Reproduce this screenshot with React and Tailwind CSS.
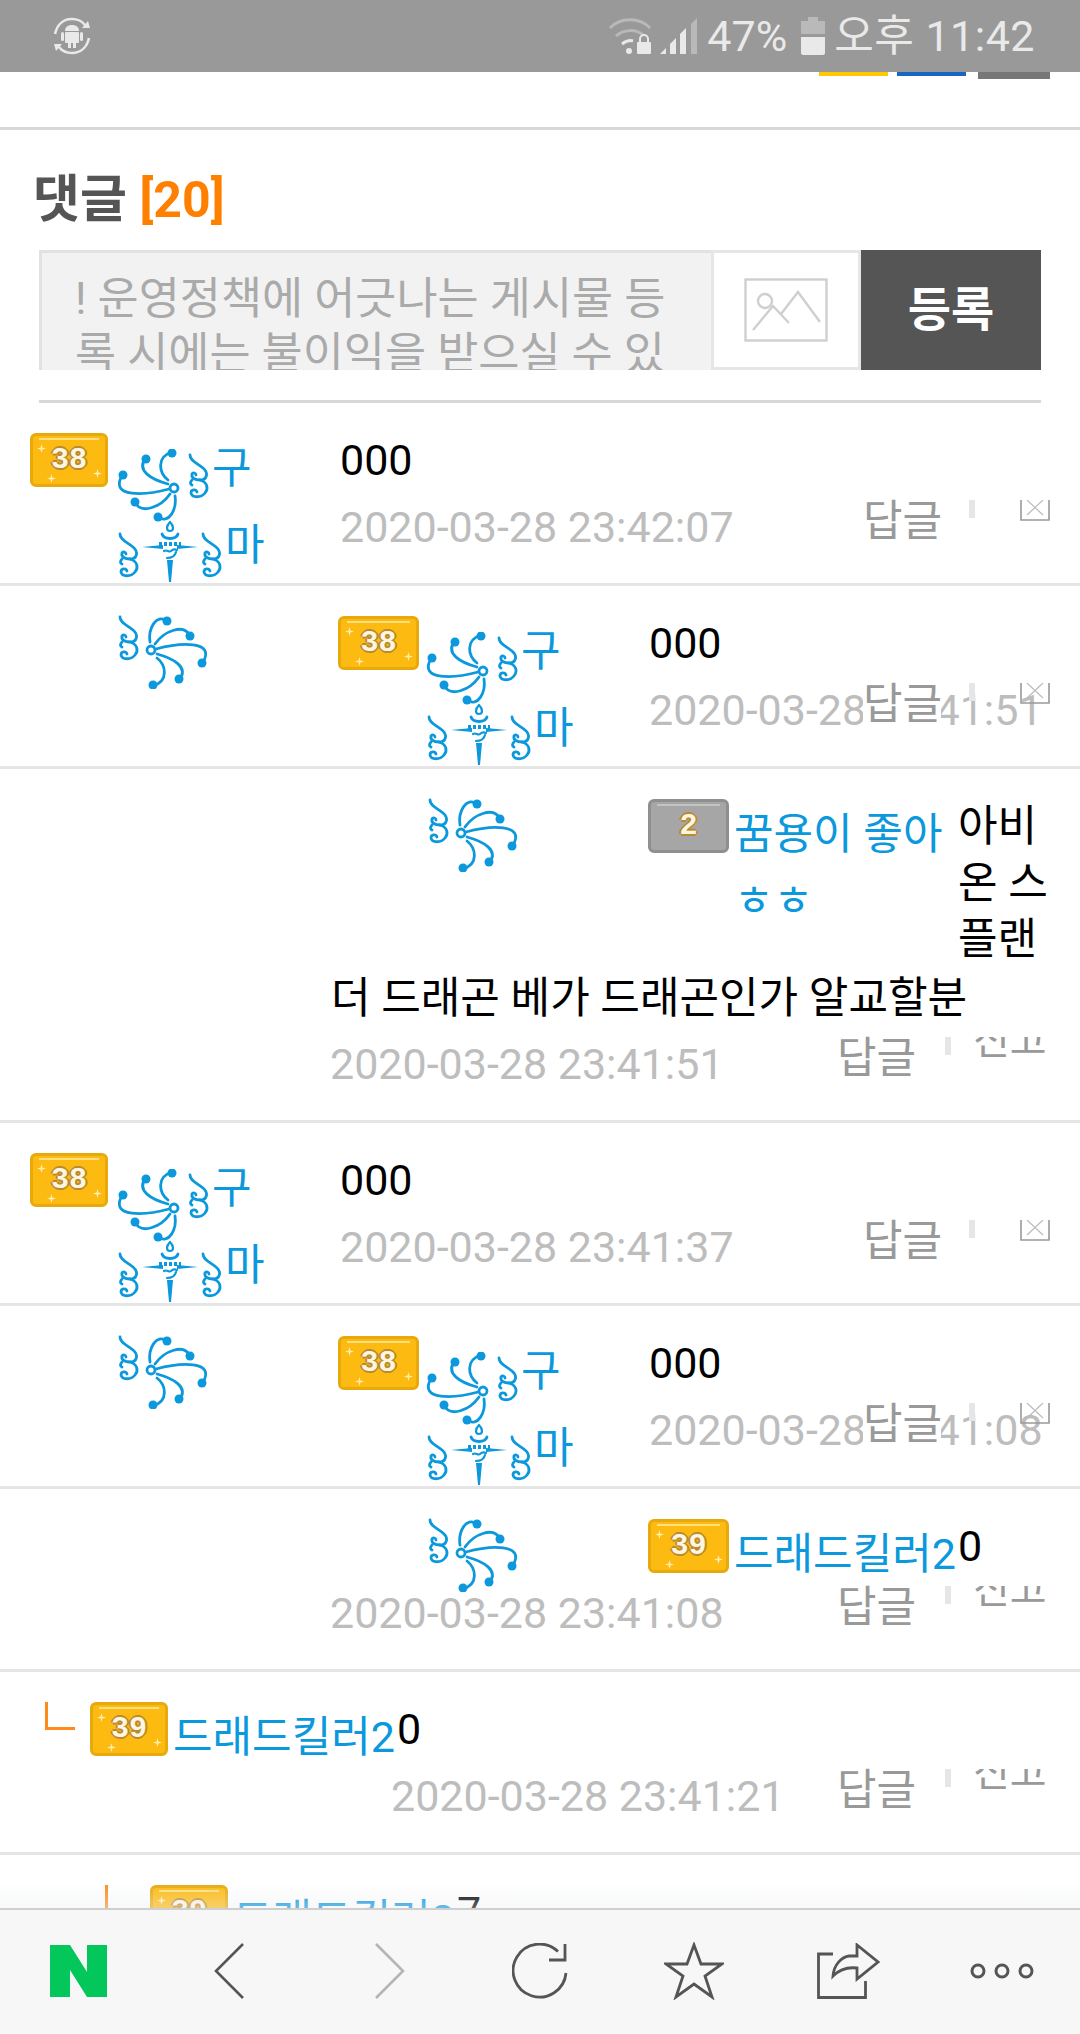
const BLUE = '#0b98dc'

function SCurl({ className }) {
  return (
    <svg viewBox="0 0 24 46" width="24" height="46" fill="none" stroke={BLUE} strokeWidth="2.8" strokeLinecap="round" className={className}>
      <path d="M3 2C3 8 10 10 16 15c6 5 4 12-3 12-5 0-9-2-8-6 1-2 4-1 4 1" />
      <path d="M13 27c7 2 9 8 5 13-4 5-13 5-14 0 0-4 5-4 6-1" />
      <path d="M5 27c-2 2-2 4 0 5" />
    </svg>
  )
}

function Flower({ className }) {
  return (
    <svg viewBox="0 0 64 74" width="64" height="74" fill="none" stroke={BLUE} strokeWidth="2.8" strokeLinecap="round" className={className}>
      <circle cx="57" cy="39" r="4" />
      <path d="M51 31C42 24 39 8 55 3" />
      <path d="M51 35C36 31 18 22 29 9" />
      <path d="M52 40C30 46 -10 50 6 25" />
      <path d="M53 45C44 58 24 66 18 53" />
      <path d="M58 47C60 60 52 76 41 68" />
      <g fill={BLUE} stroke="none">
        <circle cx="55" cy="4" r="4.5" />
        <circle cx="29" cy="10" r="4.5" />
        <circle cx="6" cy="26" r="4.5" />
        <circle cx="18" cy="53" r="4.5" />
        <circle cx="41" cy="68" r="4.5" />
      </g>
    </svg>
  )
}

function Dagger({ className }) {
  return (
    <svg viewBox="0 0 56 62" width="56" height="62" fill="none" stroke={BLUE} strokeWidth="2.2" strokeLinecap="round" className={className}>
      <path d="M28 2c-4 4-4 9 0 9s4-5 0-9z" />
      <path d="M20 14c2 6 14 6 16 0" strokeWidth="2.8" />
      <path d="M17 24h22" strokeDasharray="3 2" strokeWidth="4" strokeLinecap="butt" />
      <path d="M22 31c3-2 5 2 7 0s4-2 6-1M25 38c4 0 8-2 9-6" />
      <path d="M0 27l21-2v4z" fill={BLUE} stroke="none" />
      <path d="M56 27l-21-2v4z" fill={BLUE} stroke="none" />
      <path d="M25 40h6l-2 22h-2z" fill={BLUE} stroke="none" />
    </svg>
  )
}

function Lead() {
  return (
    <div className="flex w-[221px] shrink-0 pt-[29px] items-start">
      <SCurl />
      <Flower className="rotate-180 ml-[3px] shrink-0" />
    </div>
  )
}

function Nick() {
  return (
    <div className="w-[150px] shrink-0 pt-[46px] text-[#0b98dc] text-[43px] leading-[42px]">
      <div className="flex h-[71px] items-start">
        <Flower className="shrink-0" />
        <SCurl className="ml-[6px] mt-[4px] shrink-0" />
        <span className="ml-[1px] -mt-[2px]">구</span>
      </div>
      <div className="flex h-[62px] items-start">
        <SCurl className="mt-[12px] shrink-0" />
        <Dagger className="ml-[1px] shrink-0" />
        <SCurl className="ml-[2px] mt-[12px] shrink-0" />
        <span className="ml-[1px] mt-[4px]">마</span>
      </div>
    </div>
  )
}

function Sparkle({ className }) {
  return (
    <svg viewBox="0 0 10 10" width="9" height="9" className={`absolute ${className}`} fill="#ffeeb0">
      <path d="M5 0l1 4 4 1-4 1-1 4-1-4-4-1 4-1z" />
    </svg>
  )
}

function Badge({ level, gray, narrow }) {
  const tone = gray ? 'bg-[#a6a6a6] border-[#8f8f8f]' : 'bg-[#fdba10] border-[#e8a90c]'
  return (
    <div className={`relative mt-[30px] h-[54px] shrink-0 rounded-[6px] border-[3px] flex items-center justify-center ${narrow ? 'w-[78px]' : 'w-[81px]'} ${tone}`}>
      <div className={`absolute left-[6px] right-[6px] top-[2px] h-[2px] ${gray ? 'bg-[#c4c4c4]' : 'bg-[#ffdf80]'}`} />
      {!gray && <Sparkle className="left-[4px] top-[8px]" />}
      {!gray && <Sparkle className="right-[3px] bottom-[6px]" />}
      {!gray && <Sparkle className="left-[14px] bottom-[1px]" />}
      <span className="[font-family:'Liberation_Mono',monospace] font-bold text-[30px] leading-none text-[#fff6e0] [text-shadow:2px_0_0_#b98a32,-2px_0_0_#b98a32,0_2px_0_#b98a32,0_-2px_0_#b98a32]">{level}</span>
    </div>
  )
}

function Name({ children }) {
  return <div className="ml-[5px] pt-[37px] text-[43px] leading-[57px] text-[#0b98dc] whitespace-nowrap">{children}</div>
}

function Date_({ children, className = '' }) {
  return <div className={`text-[43px] leading-[57px] text-[#bdbdbd] whitespace-nowrap ${className}`}>{children}</div>
}

function Body({ text, date }) {
  return (
    <div className="ml-[73px] pt-[29px]">
      <div className="text-[43px] leading-[57px] text-black">{text}</div>
      <Date_ className="mt-[10px]">{date}</Date_>
    </div>
  )
}

function Actions({ deep }) {
  return (
    <div className={`absolute bottom-[35px] h-[57px] flex items-start ${deep ? 'left-[837px]' : 'left-[863px]'}`}>
      <span className="w-[78px] mt-[3px] bg-white text-[43px] leading-[54px] text-[#999] whitespace-nowrap">답글</span>
      <div className={`mt-[9px] w-[6px] h-[18px] bg-[#e6e6e6] ${deep ? 'ml-[30px]' : 'ml-[28px]'}`} />
      {deep ? (
        <div className="ml-[22px] mt-[9px] h-[24px] overflow-hidden flex items-end text-[#999] text-[40px] leading-[40px] whitespace-nowrap">
          <span className="block">신고</span>
        </div>
      ) : (
        <svg viewBox="0 0 30 21" width="30" height="21" fill="none" className="ml-[45px] mt-[9px]">
          <path d="M1 0v20h28V0" stroke="#999" strokeWidth="1.6" />
          <path d="M7 0l16 15M23 0L7 15" stroke="#bbb" strokeWidth="1.2" />
        </svg>
      )}
    </div>
  )
}

function Row({ children, deep, tall }) {
  return (
    <div className={`relative border-b-[3px] border-[#e5e5e5] ${tall ? 'h-[354px]' : 'h-[183px]'}`}>
      {children}
      <Actions deep={deep} />
    </div>
  )
}

function TopComment({ text, date }) {
  return (
    <Row>
      <div className="flex pl-[30px]">
        <Badge level="38" narrow />
        <div className="ml-[9px]"><Nick /></div>
        <Body text={text} date={date} />
      </div>
    </Row>
  )
}

function ReplyComment({ text, date }) {
  return (
    <Row>
      <div className="flex pl-[117px]">
        <Lead />
        <Badge level="38" />
        <div className="ml-[7px]"><Nick /></div>
        <Body text={text} date={date} />
      </div>
    </Row>
  )
}

function StatusBar() {
  return (
    <div className="h-[72px] bg-[#999999] flex items-center pl-[53px] pr-[45px] text-[#e9e9e9]">
      <svg viewBox="0 0 38 38" width="38" height="38" fill="none" stroke="#e9e9e9" strokeWidth="2.6">
        <path d="M2 17C4 8 10 2 19 2c6 0 10 2 13 6" />
        <path d="M36 21c-2 9-8 15-17 15-6 0-10-2-13-6" />
        <path d="M29 11h8l-2-7z" fill="#e9e9e9" stroke="none" />
        <path d="M9 27H1l2 7z" fill="#e9e9e9" stroke="none" />
        <g fill="#e9e9e9" stroke="none">
          <path d="M12 14c0-4 3-6 7-6s7 2 7 6z" />
          <rect x="12" y="15" width="14" height="11" rx="1" />
          <rect x="15" y="26" width="3" height="5" />
          <rect x="20" y="26" width="3" height="5" />
          <rect x="8" y="15" width="3" height="9" rx="1.5" />
          <rect x="27" y="15" width="3" height="9" rx="1.5" />
        </g>
      </svg>
      <div className="ml-auto flex items-center">
        <svg viewBox="0 0 44 38" width="44" height="38" fill="none">
          <path d="M2 11c10-11 30-11 40 0" stroke="#b9b9b9" strokeWidth="3" />
          <path d="M8 19c8-7 20-7 27-1" stroke="#b9b9b9" strokeWidth="3" />
          <path d="M14 27c4-3 8-4 11-3" stroke="#e9e9e9" strokeWidth="3" />
          <circle cx="21" cy="34" r="3" fill="#e9e9e9" />
          <rect x="29" y="25" width="14" height="12" rx="1" fill="#e9e9e9" />
          <path d="M32 25v-3a4 4 0 0 1 8 0v3" stroke="#e9e9e9" strokeWidth="2" />
        </svg>
        <svg viewBox="0 0 37 38" width="37" height="38" className="ml-[8px]">
          <path d="M0 37l6-6v6z" fill="#e9e9e9" />
          <path d="M10 37V27l6-6v16z" fill="#e9e9e9" />
          <path d="M20 37V17l6-6v26z" fill="#e9e9e9" />
          <path d="M31 37V7l6-6v36z" fill="#b9b9b9" />
        </svg>
        <span className="ml-[10px] text-[43px] leading-none [font-family:Roboto,sans-serif]">47%</span>
        <svg viewBox="0 0 24 38" width="24" height="38" className="ml-[14px]">
          <path d="M7 0h10v4h7v13H0V4h7z" fill="#b9b9b9" />
          <path d="M0 20h24v16a2 2 0 0 1-2 2H2a2 2 0 0 1-2-2z" fill="#e9e9e9" />
        </svg>
        <span className="ml-[9px] text-[43px] leading-none tracking-[0.5px]">오후 11:42</span>
      </div>
    </div>
  )
}

function BottomBar() {
  return (
    <div className="absolute left-0 right-0 bottom-0">
      <div className="h-[26px] bg-gradient-to-b from-transparent to-[#eef0f4]/40" />
      <div className="h-[126px] bg-[#f7f7f7] border-t-[2px] border-[#cfcfcf] flex items-center pl-[50px] pb-[2px]">
        <svg viewBox="0 0 57 52" width="57" height="52">
          <path d="M0 0h20l17 27V0h20v52H37L20 25v27H0z" fill="#03c75a" />
        </svg>
        <svg viewBox="0 0 30 56" width="30" height="56" fill="none" stroke="#555" strokeWidth="2.6" className="ml-[107px]">
          <path d="M29 1L2 28l27 27" />
        </svg>
        <svg viewBox="0 0 30 56" width="30" height="56" fill="none" stroke="#b5b5b5" strokeWidth="2.6" className="ml-[131px]">
          <path d="M1 1l27 27L1 55" />
        </svg>
        <svg viewBox="0 0 56 56" width="56" height="56" fill="none" stroke="#555" strokeWidth="2.8" className="ml-[107px]">
          <path d="M54 30A26.500 26.500 0 1 1 46 8.500" />
          <path d="M53 1v16H37" />
        </svg>
        <svg viewBox="0 0 60 58" width="60" height="58" fill="none" stroke="#555" strokeWidth="2.8" className="ml-[96px]">
          <path d="M30 3l7 19h21L41 34l7 21-18-13-18 13 7-21L2 22h21z" />
        </svg>
        <svg viewBox="0 0 63 56" width="63" height="56" fill="none" stroke="#555" strokeWidth="2.8" className="ml-[93px]">
          <path d="M16 11H1.500v43.500h47V38" />
          <path d="M16 33c1-12 9-19 16-20 3 0 5 0 8-0V2l21 17-21 17V25c-8-1-17 1-24 8z" />
        </svg>
        <svg viewBox="0 0 64 16" width="64" height="16" fill="none" stroke="#555" strokeWidth="3" className="ml-[90px]">
          <circle cx="8" cy="8" r="6" />
          <circle cx="32" cy="8" r="6" />
          <circle cx="56" cy="8" r="6" />
        </svg>
      </div>
    </div>
  )
}

export default function App() {
  return (
    <div className="relative h-[2034px] overflow-hidden bg-white [font-family:Roboto,'Noto_Sans_CJK_KR',sans-serif]">
      <StatusBar />

      <div className="h-[55px] flex justify-end items-start pr-[30px]">
        <div className="w-[69px] h-[4px] bg-[#ffc800]" />
        <div className="w-[69px] h-[4px] bg-[#1766c4] ml-[9px]" />
        <div className="w-[72px] h-[7px] bg-[#777] ml-[12px]" />
      </div>
      <div className="h-[3px] bg-[#d8d8d8]" />

      <div className="h-[120px] pl-[33px] pt-[40px]">
        <h2 className="text-[51px] leading-[60px] font-bold text-[#555]">
          댓글 <span className="text-[#ff7f00] text-[50px]">[20]</span>
        </h2>
      </div>

      <div className="mx-[39px] flex h-[120px]">
        <div className="w-[672px] border-t-[3px] border-l-[3px] border-[#e2e2e2] bg-[#f2f2f2] pl-[33px] pt-[19px] text-[44.700px] leading-[55px] text-[#aaaaaa] overflow-hidden whitespace-nowrap">
          <div>! 운영정책에 어긋나는 게시물 등</div>
          <div>록 시에는 불이익을 받으실 수 있</div>
        </div>
        <div className="w-[150px] border-[3px] border-[#e6e6e6] bg-white flex items-center justify-center">
          <svg viewBox="0 0 84 64" width="84" height="64" fill="none" stroke="#cfcfcf" strokeWidth="2.4">
            <rect x="1.500" y="1.500" width="81" height="61" />
            <circle cx="21" cy="23" r="7" />
            <path d="M9 52l20-24 16 17M37 36l17-22 22 30" />
          </svg>
        </div>
        <div className="w-[180px] bg-[#555] flex items-center justify-center text-white font-bold text-[47px]">등록</div>
      </div>

      <div className="mx-[39px] mt-[30px] h-[3px] bg-[#d8d8d8]" />

      <TopComment text="000" date="2020-03-28 23:42:07" />
      <ReplyComment text="000" date="2020-03-28 23:41:51" />

      <Row deep tall>
        <div className="flex pl-[427px]">
          <Lead />
          <Badge level="2" gray />
          <div className="w-[229px] shrink-0">
            <Name>꿈용이 좋아</Name>
            <div className="ml-[5px] mt-[10px] text-[43px] leading-[57px] text-[#0b98dc]">ㅎㅎ</div>
          </div>
          <div className="pt-[29px] text-[43px] leading-[56.500px] text-black whitespace-nowrap">
            <div>아비</div>
            <div>온 스</div>
            <div>플랜</div>
          </div>
        </div>
        <div className="pl-[331px] mt-[2px] text-[43px] leading-[56.500px] text-black whitespace-nowrap">더 드래곤 베가 드래곤인가 알교할분</div>
        <Date_ className="pl-[330px] mt-[10px]">2020-03-28 23:41:51</Date_>
      </Row>

      <TopComment text="000" date="2020-03-28 23:41:37" />
      <ReplyComment text="000" date="2020-03-28 23:41:08" />

      <Row deep>
        <div className="flex pl-[427px] h-[96px]">
          <Lead />
          <Badge level="39" />
          <Name>드래드킬러2</Name>
          <div className="ml-[2px] pt-[29px] text-[43px] leading-[57px] text-black">0</div>
        </div>
        <Date_ className="pl-[330px]">2020-03-28 23:41:08</Date_>
      </Row>

      <Row deep>
        <div className="flex pl-[45px] h-[96px]">
          <div className="mt-[30px] w-[30px] h-[28px] border-l-[3px] border-b-[3px] border-[#ff8c1a] shrink-0" />
          <div className="ml-[15px]"><Badge level="39" narrow /></div>
          <Name>드래드킬러2</Name>
          <div className="ml-[2px] pt-[29px] text-[43px] leading-[57px] text-black">0</div>
        </div>
        <Date_ className="pl-[391px]">2020-03-28 23:41:21</Date_>
      </Row>

      <div className="flex pl-[105px]">
        <div className="mt-[30px] w-[30px] h-[28px] border-l-[3px] border-b-[3px] border-[#ff8c1a] shrink-0" />
        <div className="ml-[15px]"><Badge level="39" narrow /></div>
        <Name>드래드킬러2</Name>
        <div className="ml-[2px] pt-[29px] text-[43px] leading-[57px] text-black">7</div>
      </div>

      <BottomBar />
    </div>
  )
}
